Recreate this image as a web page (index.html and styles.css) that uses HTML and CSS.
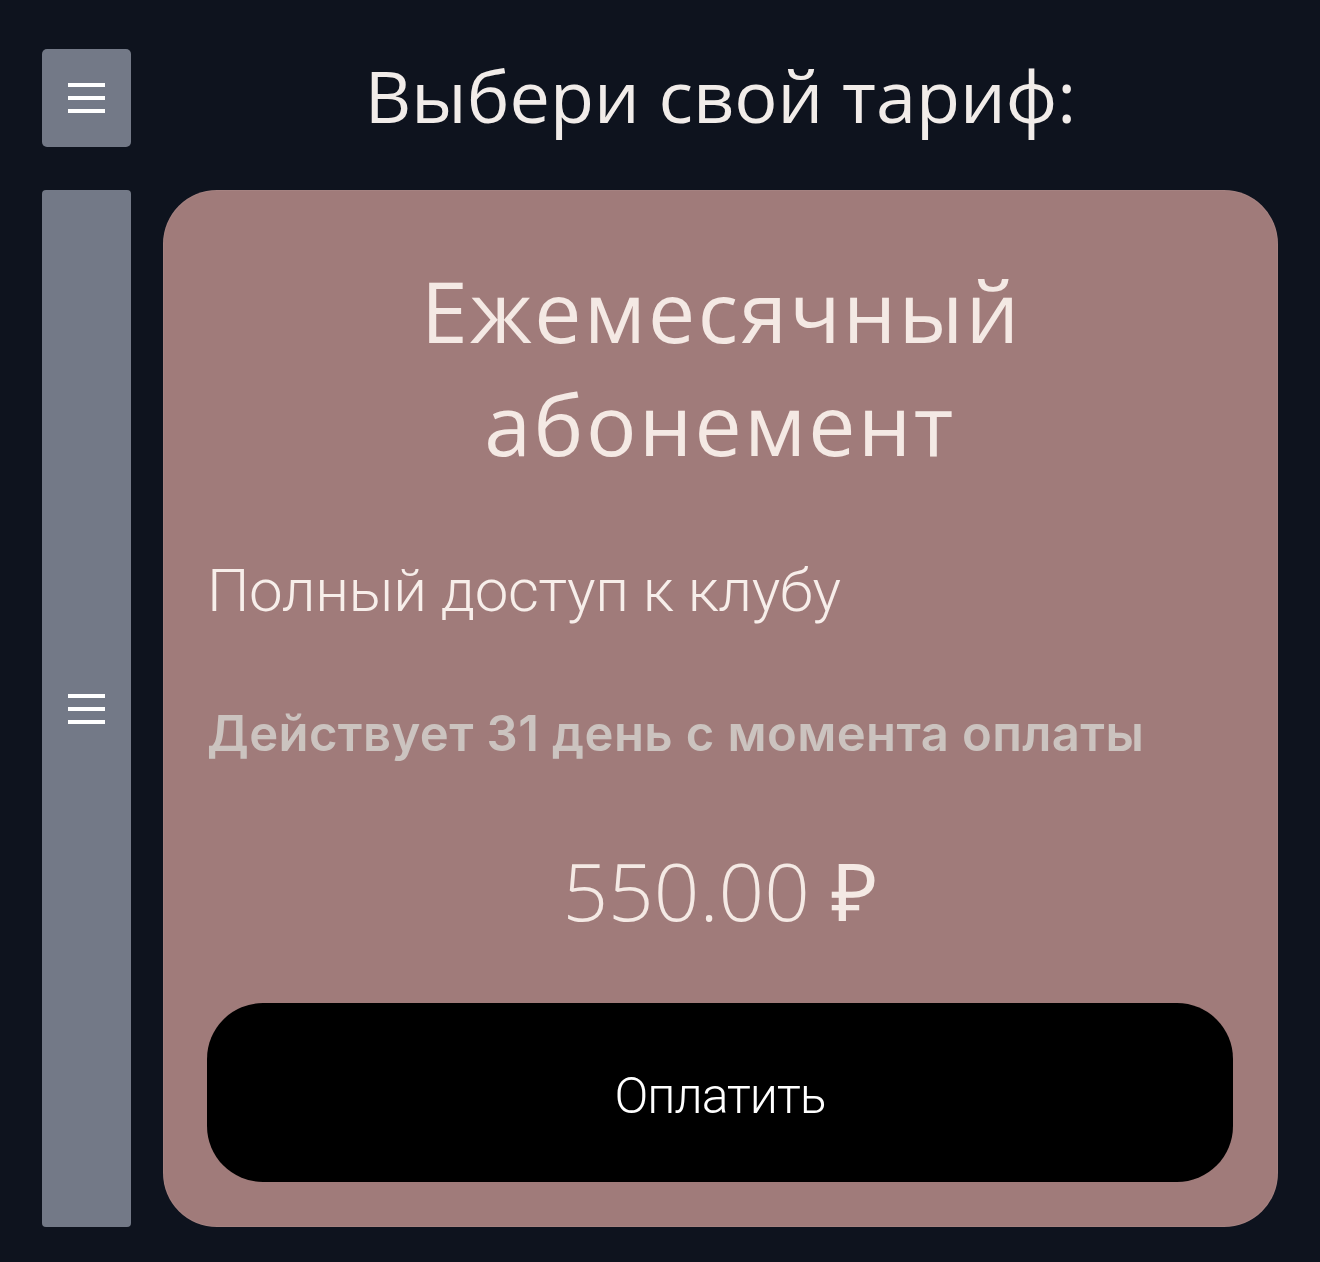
FILE: index.html
```html
<!DOCTYPE html>
<html lang="ru">
<head>
<meta charset="utf-8">
<title>Тарифы</title>
<link rel="stylesheet" href="styles.css">
</head>
<body>
<div class="page">
  <div class="left">
    <button class="menu-btn" aria-label="Меню">
      <span class="burger"><i></i><i></i><i></i></span>
    </button>
    <div class="sidebar">
      <span class="burger"><i></i><i></i><i></i></span>
    </div>
  </div>
  <div class="right">
    <h1 class="heading">Выбери свой тариф:</h1>
    <div class="card">
      <h2 class="plan-title">Ежемесячный абонемент</h2>
      <p class="plan-desc">Полный доступ к клубу</p>
      <p class="plan-term">Действует 31 день с момента оплаты</p>
      <p class="plan-price">550.00 ₽</p>
      <button class="pay-btn">Оплатить</button>
    </div>
  </div>
</div>
</body>
</html>
```
FILE: styles.css
```css
html, body {
  margin: 0;
  padding: 0;
  background: #0e131e;
}
body {
  width: 1320px;
  height: 1262px;
  overflow: hidden;
}
.page {
  display: flex;
  gap: 32px;
  padding: 49px 42px 35px 42px;
  box-sizing: border-box;
  height: 1262px;
}
.left {
  width: 89px;
  display: flex;
  flex-direction: column;
  gap: 43px;
  flex: 0 0 89px;
}
.menu-btn {
  height: 98px;
  width: 89px;
  border: none;
  border-radius: 5px;
  background: #737987;
  display: flex;
  align-items: center;
  justify-content: center;
  padding: 0;
}
.sidebar {
  flex: 1;
  background: #737987;
  border-radius: 4px;
  display: flex;
  align-items: center;
  justify-content: center;
}
.burger {
  display: flex;
  flex-direction: column;
  gap: 9px;
  width: 37px;
}
.burger i {
  display: block;
  height: 4px;
  background: #ffffff;
}
.right {
  flex: 1;
  display: flex;
  flex-direction: column;
  gap: 43px;
}
.heading {
  margin: 0;
  height: 98px;
  padding-bottom: 6px;
  box-sizing: border-box;
  display: flex;
  align-items: center;
  justify-content: center;
  font-family: "Open Sans", sans-serif;
  font-weight: 400;
  font-size: 72px;
  color: #f1ece9;
}
.card {
  flex: 1;
  background: #a07b7a;
  border-radius: 54px;
  padding: 64px 45px 45px 44px;
  box-sizing: border-box;
  display: flex;
  flex-direction: column;
  box-shadow: inset 0 0 0 1px rgba(255,255,255,0.06);
}
.plan-title {
  margin: 0 auto;
  width: 700px;
  text-align: center;
  font-family: "Open Sans", sans-serif;
  font-weight: 400;
  font-size: 84px;
  line-height: 113px;
  letter-spacing: 2.5px;
  text-indent: 2.5px;
  color: #f4e9e4;
}
.plan-desc {
  margin: 76px 0 0 0;
  font-family: Roboto, sans-serif;
  font-weight: 300;
  font-size: 60px;
  line-height: 70px;
  letter-spacing: -0.4px;
  color: #f7eeea;
}
.plan-term {
  margin: 80px 0 0 0;
  font-family: Inter, sans-serif;
  font-weight: 600;
  font-size: 49px;
  line-height: 56px;
  letter-spacing: 0.4px;
  color: #cbc3bf;
}
.plan-price {
  margin: 83px 0 0 0;
  text-align: center;
  font-family: "Open Sans", sans-serif;
  font-weight: 300;
  font-size: 80px;
  line-height: 90px;
  color: #f4e9e4;
}
.pay-btn {
  margin-top: auto;
  height: 179px;
  padding-top: 8px;
  border: none;
  border-radius: 56px;
  background: #000000;
  color: #ffffff;
  font-family: Roboto, sans-serif;
  font-weight: 300;
  font-size: 50px;
  letter-spacing: -1px;
}
```
